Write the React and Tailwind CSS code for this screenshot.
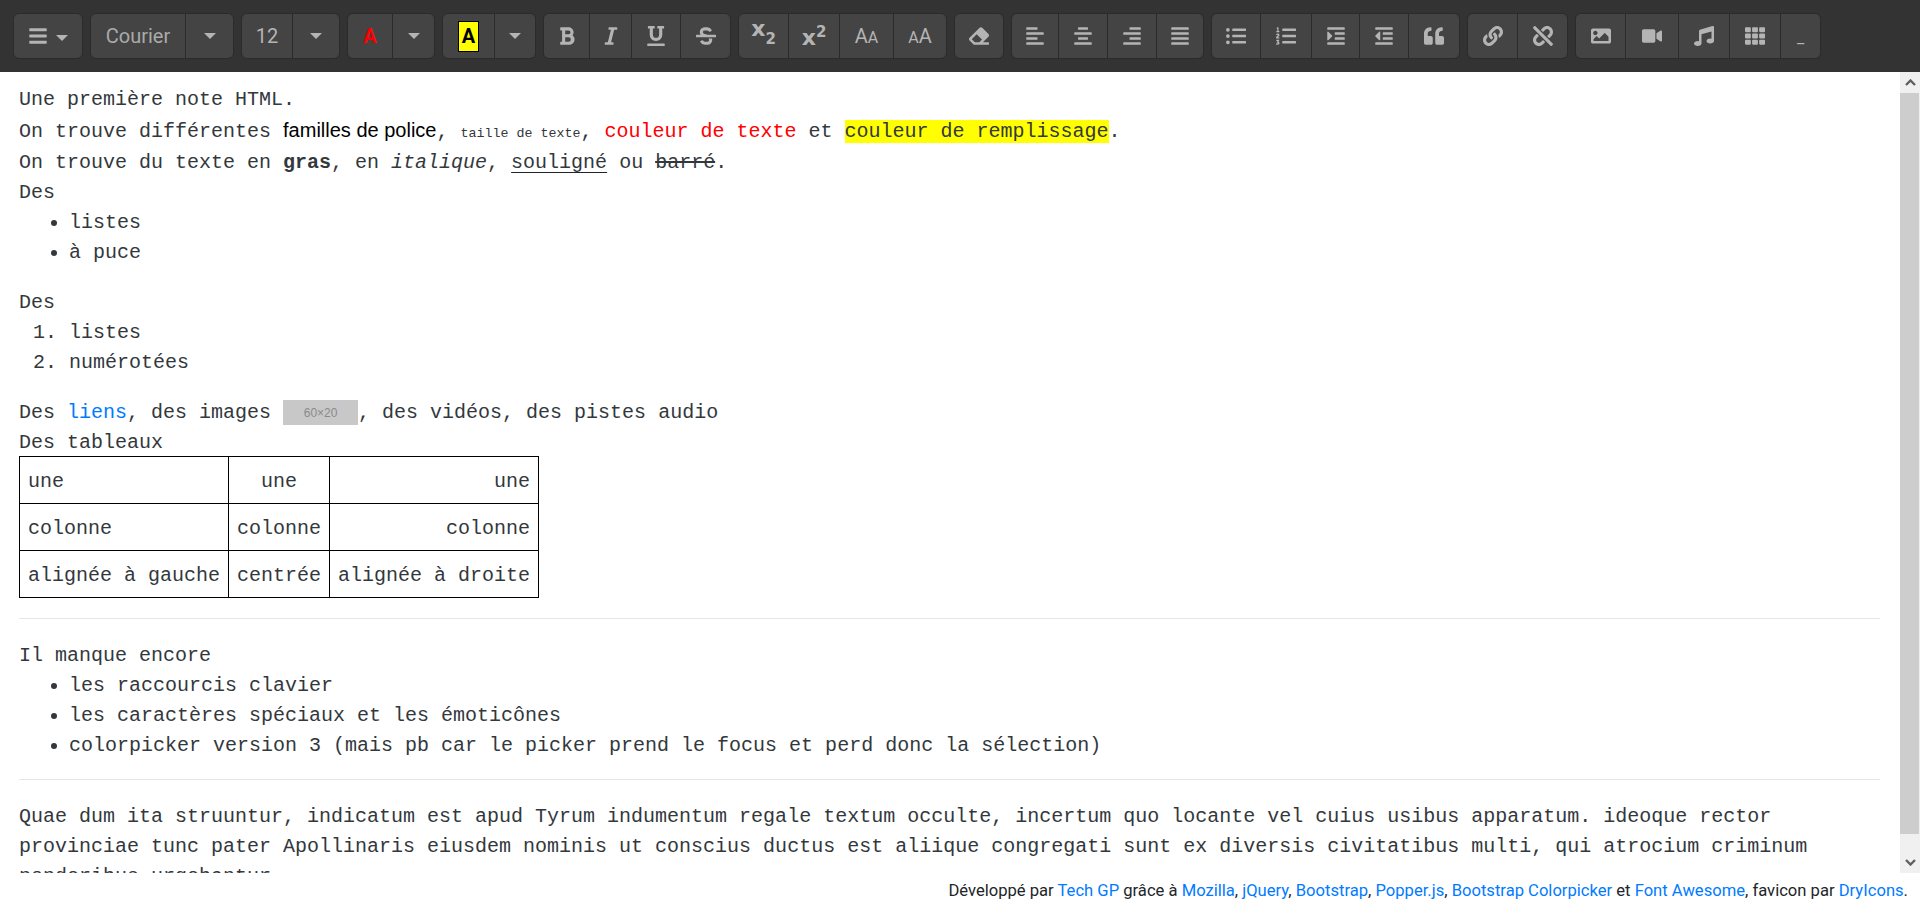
import {
  FaBars, FaBold, FaItalic, FaUnderline, FaStrikethrough, FaEraser,
  FaAlignLeft, FaAlignCenter, FaAlignRight, FaAlignJustify, FaListUl, FaListOl, FaIndent, FaOutdent,
  FaQuoteLeft, FaLink, FaUnlink, FaImage, FaVideo, FaMusic, FaTh,
} from 'react-icons/fa';

const Caret = () => (
  <span className="inline-block w-0 h-0 border-x-[6px] border-x-transparent border-t-[6px] border-t-[#b4b4b4]" />
);

// toolbar button, first/last of a group get the rounded corners from the group
function Btn({ w, children }) {
  return (
    <div className={`${w} h-[44px] flex items-center justify-center bg-[#444444] text-[#b4b4b4] border-r border-[#2b2b2b] last:border-r-0 text-[20px] [&_svg]:w-auto`}>
      {children}
    </div>
  );
}

function Group({ children }) {
  return (
    <div className="flex rounded-[6px] overflow-hidden border border-[#2b2b2b]">{children}</div>
  );
}

function Toolbar() {
  return (
    <div className="h-[72px] shrink-0 bg-[#333333] flex items-center gap-[7px] pl-[13px] font-['Roboto',sans-serif]">
      <Group>
        <Btn w="w-[68px]"><FaBars className="mr-2" /><span className="-mt-1"><Caret /></span></Btn>
      </Group>
      <Group>
        <Btn w="w-[95px]"><span className="text-[#aaaaaa]">Courier</span></Btn>
        <Btn w="w-[47px]"><Caret /></Btn>
      </Group>
      <Group>
        <Btn w="w-[51px]">12</Btn>
        <Btn w="w-[46px]"><Caret /></Btn>
      </Group>
      <Group>
        <Btn w="w-[45px]"><span className="text-[#ff0000] font-bold">A</span></Btn>
        <Btn w="w-[41px]"><Caret /></Btn>
      </Group>
      <Group>
        <Btn w="w-[52px]">
          <span className="w-[21px] h-[31px] flex items-center justify-center bg-[#ffff00] border border-black text-black font-bold">A</span>
        </Btn>
        <Btn w="w-[40px]"><Caret /></Btn>
      </Group>
      <Group>
        <Btn w="w-[46px]"><FaBold /></Btn>
        <Btn w="w-[42px]"><FaItalic /></Btn>
        <Btn w="w-[49px]"><FaUnderline /></Btn>
        <Btn w="w-[49px]"><FaStrikethrough /></Btn>
      </Group>
      <Group>
        <Btn w="w-[50px]">
          <span className="flex items-start font-['DejaVu_Sans',sans-serif] font-bold leading-[14px]">
            <span className="text-[22px] -mt-[4px]">x</span>
            <span className="text-[15px] mt-[6px]">2</span>
          </span>
        </Btn>
        <Btn w="w-[51px]">
          <span className="flex items-start font-['DejaVu_Sans',sans-serif] font-bold leading-[14px]">
            <span className="text-[22px] mt-[3px]">x</span>
            <span className="text-[15px] -mt-[3px]">2</span>
          </span>
        </Btn>
        <Btn w="w-[54px]"><span className="flex items-baseline"><span className="text-[20px]">A</span><span className="text-[16px]">A</span></span></Btn>
        <Btn w="w-[52px]"><span className="flex items-baseline"><span className="text-[16px]">A</span><span className="text-[20px]">A</span></span></Btn>
      </Group>
      <Group>
        <Btn w="w-[48px]"><FaEraser /></Btn>
      </Group>
      <Group>
        <Btn w="w-[47px]"><FaAlignLeft /></Btn>
        <Btn w="w-[49px]"><FaAlignCenter /></Btn>
        <Btn w="w-[49px]"><FaAlignRight /></Btn>
        <Btn w="w-[46px]"><FaAlignJustify /></Btn>
      </Group>
      <Group>
        <Btn w="w-[49px]"><FaListUl /></Btn>
        <Btn w="w-[51px]"><FaListOl /></Btn>
        <Btn w="w-[48px]"><FaIndent /></Btn>
        <Btn w="w-[49px]"><FaOutdent /></Btn>
        <Btn w="w-[50px]"><FaQuoteLeft /></Btn>
      </Group>
      <Group>
        <Btn w="w-[50px]"><FaLink /></Btn>
        <Btn w="w-[49px]"><FaUnlink /></Btn>
      </Group>
      <Group>
        <Btn w="w-[50px]"><FaImage /></Btn>
        <Btn w="w-[53px]"><FaVideo /></Btn>
        <Btn w="w-[51px]"><FaMusic /></Btn>
        <Btn w="w-[51px]"><FaTh /></Btn>
        <Btn w="w-[39px]"><span className="text-[16px] mt-1">_</span></Btn>
      </Group>
    </div>
  );
}

function Scrollbar() {
  return (
    <div className="w-[20px] shrink-0 bg-[#f0f0f0] flex flex-col">
      <div className="h-[21px] flex items-center justify-center">
        <svg width="11" height="7" viewBox="0 0 11 7" fill="none" stroke="#606060" strokeWidth="2.4"><path d="M1 6 5.5 1.5 10 6" /></svg>
      </div>
      <div className="flex-1">
        <div className="h-[741px] mr-[1px] bg-[#cdcdcd]" />
      </div>
      <div className="h-[21px] flex items-center justify-center">
        <svg width="11" height="7" viewBox="0 0 11 7" fill="none" stroke="#606060" strokeWidth="2.4"><path d="M1 1 5.5 5.5 10 1" /></svg>
      </div>
    </div>
  );
}

const cell = 'border border-black px-[8px] pt-[10px] pb-[6px] leading-[30px]';

function Note() {
  return (
    <div className="flex-1 min-w-0 overflow-hidden pt-[13px] pl-[19px] pr-[20px] font-['Liberation_Mono',monospace] text-[20px] leading-[30px] text-[#33383d]">
      <div>Une première note HTML.</div>
      <div className="h-[33px]">
        On trouve différentes <span className="font-['Liberation_Sans',sans-serif] text-black">familles de police</span>,{' '}
        <span className="text-[13.33px]">taille de texte</span>, <span className="text-[#ff0000]">couleur de texte</span> et{' '}
        <span className="bg-[#ffff00]">couleur de remplissage</span>.
      </div>
      <div>
        On trouve du texte en <b>gras</b>, en <i>italique</i>, <span className="underline decoration-1 decoration-[#212529] underline-offset-[4px]">souligné</span> ou <s>barré</s>.
      </div>
      <div>Des</div>
      <ul className="list-disc pl-[50px] mb-[20px]">
        <li>listes</li>
        <li>à puce</li>
      </ul>
      <div>Des</div>
      <ol className="list-decimal pl-[50px] mb-[20px]">
        <li>listes</li>
        <li>numérotées</li>
      </ol>
      <div className="h-[30px]">
        Des <a className="text-[#007bff]">liens</a>, des images{' '}
        <span className="inline-flex w-[75px] h-[25px] align-middle items-center justify-center bg-[#c8c8c8] text-[#8a8a8a] text-[12px] leading-none font-['Liberation_Sans',sans-serif]">60×20</span>
        , des vidéos, des pistes audio
      </div>
      <div className="h-[28px]">Des tableaux</div>
      <table className="border-collapse mb-[20px]">
        <tbody>
          <tr>
            <td className={cell}>une</td>
            <td className={`${cell} text-center`}>une</td>
            <td className={`${cell} text-right`}>une</td>
          </tr>
          <tr>
            <td className={cell}>colonne</td>
            <td className={`${cell} text-center`}>colonne</td>
            <td className={`${cell} text-right`}>colonne</td>
          </tr>
          <tr>
            <td className={cell}>alignée à gauche</td>
            <td className={`${cell} text-center`}>centrée</td>
            <td className={`${cell} text-right`}>alignée à droite</td>
          </tr>
        </tbody>
      </table>
      <hr className="border-t border-[#e6e6e6] mt-[20px] mb-[22px]" />
      <div>Il manque encore</div>
      <ul className="list-disc pl-[50px]">
        <li>les raccourcis clavier</li>
        <li>les caractères spéciaux et les émoticônes</li>
        <li>colorpicker version 3 (mais pb car le picker prend le focus et perd donc la sélection)</li>
      </ul>
      <hr className="border-t border-[#e6e6e6] mt-[18px] mb-[22px]" />
      <div>
        Quae dum ita struuntur, indicatum est apud Tyrum indumentum regale textum occulte, incertum quo locante vel cuius usibus apparatum. ideoque rector provinciae tunc pater Apollinaris eiusdem nominis ut conscius ductus est aliique congregati sunt ex diversis civitatibus multi, qui atrocium criminum ponderibus urgebantur.
      </div>
    </div>
  );
}

function Footer() {
  return (
    <div className="h-[37px] shrink-0 flex items-center justify-end pr-[12px] bg-white text-[16.6px] text-[#212529] font-['Roboto',sans-serif]">
      <span>
        Développé par <a className="text-[#007bff]">Tech GP</a> grâce à <a className="text-[#007bff]">Mozilla</a>,{' '}
        <a className="text-[#007bff]">jQuery</a>, <a className="text-[#007bff]">Bootstrap</a>, <a className="text-[#007bff]">Popper.js</a>,{' '}
        <a className="text-[#007bff]">Bootstrap Colorpicker</a> et <a className="text-[#007bff]">Font Awesome</a>, favicon par{' '}
        <a className="text-[#007bff]">DryIcons</a>.
      </span>
    </div>
  );
}

export default function App() {
  return (
    <div className="h-[910px] flex flex-col overflow-hidden bg-white">
      <Toolbar />
      <div className="flex-1 min-h-0 flex">
        <Note />
        <Scrollbar />
      </div>
      <Footer />
    </div>
  );
}
